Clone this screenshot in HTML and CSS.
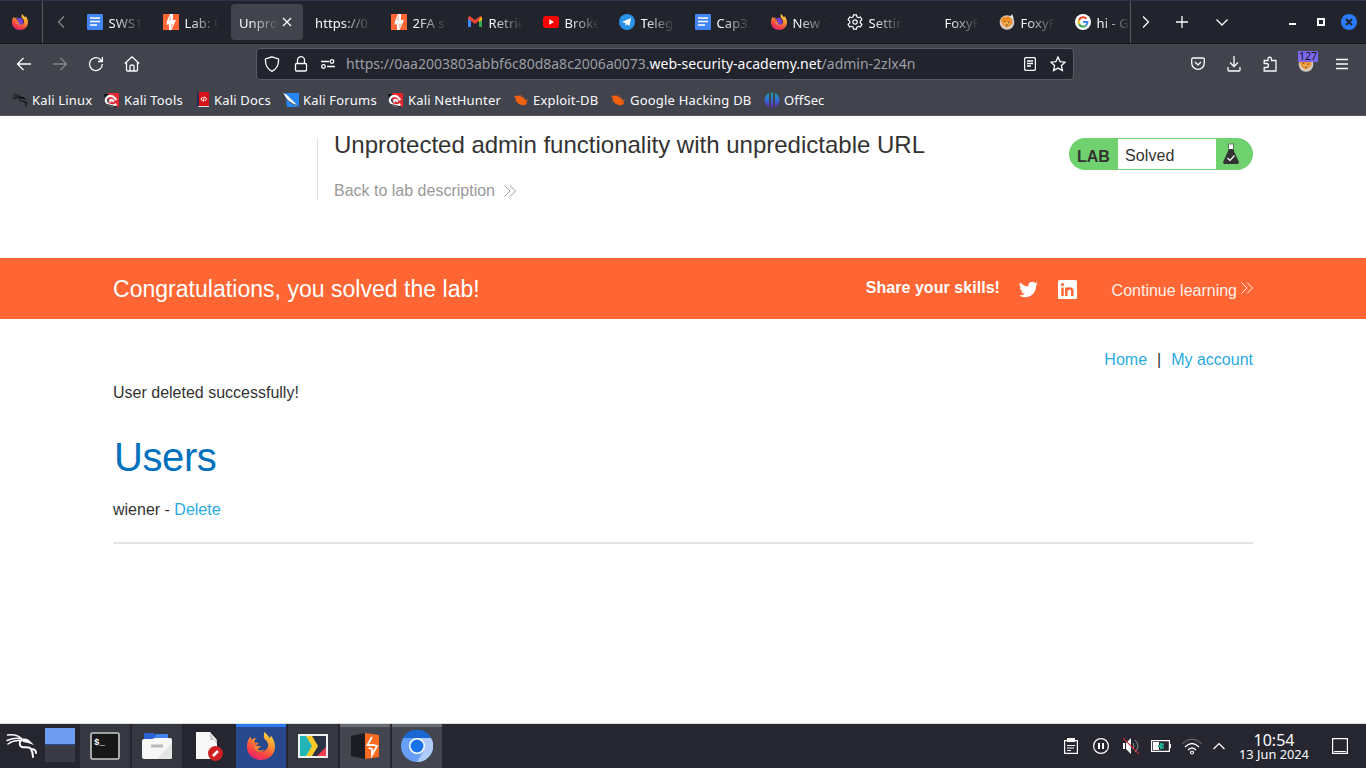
FILE: index.html
```html
<!DOCTYPE html>
<html lang="en">
<head>
<meta charset="utf-8">
<title>Unprotected admin functionality with unpredictable URL</title>
<link rel="stylesheet" href="styles.css">
</head>
<body>
<svg class="defs" width="0" height="0">
  <defs>
    <linearGradient id="fxBody" x1=".8" y1="0" x2=".3" y2="1"><stop offset="0" stop-color="#ffe13a"/><stop offset=".4" stop-color="#ff9130"/><stop offset=".75" stop-color="#fb4043"/><stop offset="1" stop-color="#e52475"/></linearGradient>
    <linearGradient id="offsec" x1="0" y1="0" x2="0" y2="1"><stop offset="0" stop-color="#16a3a6"/><stop offset=".55" stop-color="#3468d8"/><stop offset="1" stop-color="#6a22c8"/></linearGradient>
    <symbol id="firefox" viewBox="0 0 32 32">
      <path d="M20 0c2 2 4 4 6 7 1-1 1-2 1-3 3 3 5 8 5 13 0 8-7 15-16 15S0 25 0 17c0-5 1-9 4-12l1 4c2-2 4-2 6-2-2 1-3 3-2 5l4 0c1 2-2 3-4 4 1 6 8 8 13 4 4-4 2-9-2-12-1-3-1-6 0-8z" fill="url(#fxBody)"/>
      <path d="M9 12c2-4 5-5 9-4 4 2 6 7 4 11-3 5-10 5-13 0-1-1-1-2 0-3 2-1 5-2 4-4z" class="globe"/>
      <path d="M8 16c3-1 5 1 8 0-1 3-3 2-4 4 2 2 6 1 8-1-2 5-10 6-12-3z" fill="#ff8a2c"/>
    </symbol>
    <symbol id="doc" viewBox="0 0 16 16"><rect width="16" height="16" rx="1" fill="#4285f4"/><path d="M3 4h10M3 7.500h10M3 11h7" stroke="#fff" stroke-width="1.600"/></symbol>
    <symbol id="burp" viewBox="0 0 16 16"><rect width="16" height="16" fill="#ff6633"/><path d="M7 0h3v6h3L8.500 16H6v-5.500H3.500L4 7z" fill="#fff"/><path d="M8 0v1L5.500 6.500H8zM8 10v5l2.500-5z" fill="#ff6633" opacity=".4"/></symbol>
    <symbol id="fox" viewBox="0 0 16 16"><circle cx="8" cy="8.500" r="7.300" fill="#d7cdbf"/><path d="M1.500 6l3-3 5-.5 3 2 1 4-2 3-4 2-4-3z" fill="#f38b23"/><path d="M3 6l5 2 4-2-1 4-3 2-3-2z" fill="#f6ad4c"/><path d="M4.500 7l2 1M9 9l2-1.500M7 11h2" stroke="#6a4b30"/><path d="M11 3l2-3 2 5z" fill="#eee"/></symbol>
    <symbol id="dragon" viewBox="0 0 32 26"><path d="M2.500 3C9 2 14 3 18 8M2 8.500c5-2 10-3 15-1.500M3 12c4-3 8-4 12-3.500" fill="none" stroke="currentColor" stroke-width="1.500" stroke-linecap="round"/><path d="M17 8c-3 1-3 6 0 7 3 1 7-1 9 2 1 2 2 4 2 8M26 17c3 0 5 1 5 4" fill="none" stroke="currentColor" stroke-width="1.900" stroke-linecap="round"/><path d="M17 7c4-1 6 0 8 2l4 4-6-2-5-1z" fill="currentColor"/></symbol>
    <symbol id="tools" viewBox="0 0 16 16"><path d="M4 1h11v14L5 13z" fill="#e8262d"/><path d="M0 2h5L1 7z" fill="#111"/><path d="M12.500 8L9 4.500C5 2.500 1 5.500 2 9.500c2 4 7 5 10.500 2.500M10 9.500L8 8c-2-.5-2.500 1-1 2" fill="none" stroke="#f4f4f4" stroke-width="2.200"/><path d="M3 12.500l10 2.500" stroke="#222"/></symbol>
    <symbol id="bug" viewBox="0 0 16 16"><path d="M2 5c2-3 5-1 7 0l4 3c1 2 1 4-1 5-3 1-6-1-8-3z" fill="#f26311"/><path d="M1 4l3 2M2 9h4M5 12l2-2M8 3v3M11 5l-1 3M15 8l-4 1M14 12l-4-2" stroke="#ed5b0d" stroke-width=".8"/></symbol>
    <symbol id="chev2" viewBox="0 0 12 12"><path d="M.5.500L6 6 .500 11.500M6 .500L11.500 6 6 11.500" fill="none" stroke="currentColor"/></symbol>
  </defs>
</svg>

<div class="tabbar">
  <div class="pinned"><svg width="16" height="16"><use href="#firefox"/></svg></div>
  <div class="scroll-left"><svg width="8" height="12" viewBox="0 0 8 12"><path d="M7 .5L1.500 6 7 11.500" class="dimline"/></svg></div>
  <div class="tabs">
    <div class="tab"><svg width="16" height="16"><use href="#doc"/></svg><span class="fade">SWS1</span></div>
    <div class="tab"><svg width="16" height="16"><use href="#burp"/></svg><span class="fade">Lab: Un</span></div>
    <div class="tab active"><span class="fade">Unprot</span><svg class="close" width="10" height="10" viewBox="0 0 10 10"><path d="M1 1l8 8M9 1L1 9" class="line"/></svg></div>
    <div class="tab"><span class="fade">https://0aa</span></div>
    <div class="tab"><svg width="16" height="16"><use href="#burp"/></svg><span class="fade">2FA si</span></div>
    <div class="tab"><svg width="16" height="16" viewBox="0 0 16 16"><path d="M2.500 13V4" stroke="#4285f4" stroke-width="3"/><path d="M13.500 13V4" stroke="#34a853" stroke-width="3"/><path d="M1.500 3L8 8l6.500-5" stroke="#ea4335" stroke-width="3" fill="none"/><path d="M12 5l3-2.500V6l-3 2z" fill="#fbbc04"/></svg><span class="fade">Retrie</span></div>
    <div class="tab"><svg width="16" height="16" viewBox="0 0 16 16"><rect y="2" width="16" height="12" rx="3" fill="#f00"/><path d="M6.300 5.300L11 8l-4.700 2.700z" fill="#fff"/></svg><span class="fade">Broke</span></div>
    <div class="tab"><svg width="16" height="16" viewBox="0 0 16 16"><circle cx="8" cy="8" r="8" fill="#2a93e8"/><path d="M3 8l9-4-1.500 8-2.500-1.800L6.500 12V9z" fill="#fff"/></svg><span class="fade">Telegr</span></div>
    <div class="tab"><svg width="16" height="16"><use href="#doc"/></svg><span class="fade">Cap3.</span></div>
    <div class="tab"><svg width="16" height="16"><use href="#firefox"/></svg><span class="fade">New T</span></div>
    <div class="tab"><svg width="16" height="16" viewBox="0 0 16 16" fill="none" stroke="#fbfbfe" stroke-width="1.200"><circle cx="8" cy="8" r="2.200"/><path d="M6.500.8h3l.4 2 1.500.9 2-.7 1.500 2.600-1.600 1.500v1.800l1.600 1.500-1.500 2.600-2-.7-1.500.9-.4 2h-3l-.4-2-1.500-.9-2 .7-1.500-2.600 1.600-1.500V7.100L1.100 5.600 2.600 3l2 .7 1.500-.9z"/></svg><span class="fade">Setting</span></div>
    <div class="tab"><i class="noicon"></i><span class="fade">FoxyP</span></div>
    <div class="tab"><svg width="16" height="16"><use href="#fox"/></svg><span class="fade">FoxyP</span></div>
    <div class="tab last"><svg width="16" height="16" viewBox="0 0 16 16"><circle cx="8" cy="8" r="8" fill="#fff"/><g fill="none" stroke-width="2"><path d="M11.500 4.700A4.500 4.500 0 0 0 4 6" stroke="#ea4335"/><path d="M4 6a4.500 4.500 0 0 0 0 4" stroke="#fbbc05"/><path d="M4 10a4.500 4.500 0 0 0 7 1.500" stroke="#34a853"/><path d="M8 8h4.500c0 1.500-.5 2.700-1.500 3.500" stroke="#4285f4"/></g></svg><span class="fade">hi - Go</span></div>
  </div>
  <div class="tab-tools">
    <svg width="8" height="12" viewBox="0 0 8 12"><path d="M1 .5L6.500 6 1 11.500" class="line"/></svg>
    <svg width="12" height="12" viewBox="0 0 12 12"><path d="M6 0v12M0 6h12" class="line"/></svg>
    <svg width="12" height="7" viewBox="0 0 12 7"><path d="M.5.500L6 6 11.500.500" class="line"/></svg>
  </div>
  <div class="window-tools">
    <i class="min"></i><i class="max"></i>
    <svg width="16" height="16" viewBox="0 0 16 16"><circle cx="8" cy="8" r="8" fill="#2a7bff"/><path d="M5 5l6 6M11 5l-6 6" stroke="#22242c" stroke-width="2"/></svg>
  </div>
</div>

<div class="navbar">
  <div class="nav-left">
    <svg width="16" height="16" viewBox="0 0 16 16"><path d="M15 8H1.500M7.500 2L1.500 8l6 6" class="line"/></svg>
    <svg width="16" height="16" viewBox="0 0 16 16"><path d="M1 8h13.500M8.500 2l6 6-6 6" class="dimline"/></svg>
    <svg width="16" height="16" viewBox="0 0 16 16"><path d="M14.300 8A6.400 6.400 0 1 1 12 3.200L14 5M14.400 1v4.500H10" class="line"/></svg>
    <svg width="16" height="16" viewBox="0 0 16 16"><path d="M.8 7.500L8 .8l7.200 6.700M2.500 6.500v7.500q0 1 1 1h9q1 0 1-1V6.500M6 15v-5q0-1 2-1t2 1v5" class="line"/></svg>
  </div>
  <div class="urlbar">
    <div class="url-icons">
      <svg width="16" height="16" viewBox="0 0 16 16"><path d="M8 .8L14.500 3C15 9 12.500 13 8 15.300 3.500 13 1 9 1.500 3z" class="line"/></svg>
      <svg width="14" height="16" viewBox="0 0 14 16"><path d="M3.500 7.500V4.200a3.500 3.500 0 0 1 7 0v3.300M2.500 7.500h9q1 0 1 1V14q0 1-1 1h-9q-1 0-1-1V8.500q0-1 1-1z" class="line"/></svg>
      <svg width="14" height="12" viewBox="0 0 14 12"><path d="M0 3.500h8M6 8.500h8" class="line"/><circle cx="11" cy="3.500" r="1.800" class="line"/><circle cx="2.500" cy="8.500" r="1.800" class="line"/></svg>
    </div>
    <div class="url">https://0aa2003803abbf6c80d8a8c2006a0073.<b>web-security-academy.net</b>/admin-2zlx4n</div>
    <div class="url-end">
      <svg width="12" height="14" viewBox="0 0 12 14"><rect x=".6" y=".6" width="10.800" height="12.800" rx="1.500" class="line"/><path d="M3 4h6M3 6.500h6M3 9h4" class="line"/></svg>
      <svg width="16" height="16" viewBox="0 0 16 16"><path d="M8 1l2.100 4.600 5 .6-3.700 3.400 1 5L8 12.100 3.600 14.600l1-5L.9 6.200l5-.6z" class="line"/></svg>
    </div>
  </div>
  <div class="nav-right">
    <svg width="14" height="14" viewBox="0 0 14 14"><path d="M2 1h10q1.300 0 1.300 1.500V6A6.300 6.300 0 0 1 .7 6V2.500Q.7 1 2 1zM4 5l3 3 3-3" class="line"/></svg>
    <svg width="14" height="16" viewBox="0 0 14 16"><path d="M7 0v10M3 6.500l4 4 4-4M1 11v3q0 1 1 1h10q1 0 1-1v-3" class="line"/></svg>
    <svg width="14" height="16" viewBox="0 0 14 16"><path d="M1.200 7.500V4.500H5V3a1.700 1.700 0 0 1 3.500 0v1.500H13V15H1.200v-3.500H3.500a1.800 1.800 0 0 0 0-4z" class="line"/></svg>
    <div class="proxy"><svg width="16" height="16"><use href="#fox"/></svg><span class="badge">127</span></div>
    <svg width="12" height="12" viewBox="0 0 12 12"><path d="M0 1.500h12M0 6h12M0 10.500h12" class="line"/></svg>
  </div>
</div>

<div class="bookmarks">
  <div class="bm bm-a"><svg class="black" width="16" height="16"><use href="#dragon"/></svg>Kali Linux</div>
  <div class="bm bm-b"><svg width="16" height="16"><use href="#tools"/></svg>Kali Tools</div>
  <div class="bm bm-c"><svg width="16" height="16" viewBox="0 0 16 16"><path d="M3 0h12v15H3z" fill="#d41419"/><path d="M3 0h2v15H3z" fill="#282a53"/><path d="M4 14h11v1H4z" fill="#ddd"/><path d="M8.500 5L7 7l1.500 2M11 5l1.500 2L11 9M10.200 4.500L9.300 9.500" stroke="#fff" fill="none"/></svg>Kali Docs</div>
  <div class="bm bm-d"><svg width="16" height="16" viewBox="0 0 16 16"><path d="M2 1h14v14H4z" fill="#2585f5"/><path d="M0 1l4 2 4 4 7 7-4-1-6-4-3-4z" fill="#fff"/><path d="M0 2l4 6 6 4 5 2" stroke="#1b1d26" fill="none" stroke-width=".8"/></svg>Kali Forums</div>
  <div class="bm bm-e"><svg width="16" height="16"><use href="#tools"/></svg>Kali NetHunter</div>
  <div class="bm bm-f"><svg width="16" height="16"><use href="#bug"/></svg>Exploit-DB</div>
  <div class="bm bm-g"><svg width="16" height="16"><use href="#bug"/></svg>Google Hacking DB</div>
  <div class="bm bm-h"><svg width="16" height="16" viewBox="0 0 16 16"><path d="M5 1v14C-1 12-1 4 5 1zM11 1v14c6-3 6-11 0-14zM7 .5h2v15H7z" fill="url(#offsec)"/></svg>OffSec</div>
</div>

<main class="page">
  <header class="lab-header">
    <div class="lab-title">
      <h2>Unprotected admin functionality with unpredictable URL</h2>
      <a class="back"><span>Back to lab description</span><svg width="12" height="12"><use href="#chev2"/></svg></a>
    </div>
    <div class="lab-status">
      <b>LAB</b><p>Solved</p>
      <svg width="18" height="22" viewBox="0 0 18 22"><path d="M6.500 1v6L1.500 18Q.5 21 2.500 21h13q2 0 1-3L11.500 7V1z" fill="#333332"/><path d="M7 1h4v5H7z" fill="#fff"/><path d="M5.500 1h7" stroke="#777"/><path d="M5.500 15l2.500 2.500 4.500-5" fill="none" stroke="#fff" stroke-width="1.200"/></svg>
    </div>
  </header>
  <section class="solved">
    <h4>Congratulations, you solved the lab!</h4>
    <div class="share"><b>Share your skills!</b>
      <svg width="19" height="19" viewBox="0 0 24 24"><path fill="#fff" d="M23.950 4.570a10 10 0 0 1-2.820.770 4.960 4.960 0 0 0 2.160-2.720c-.95.550-2 .950-3.130 1.180a4.920 4.920 0 0 0-8.380 4.480C7.690 8.090 4.070 6.130 1.640 3.160a4.920 4.920 0 0 0 1.520 6.570 4.900 4.900 0 0 1-2.230-.610v.060c0 2.390 1.700 4.380 3.950 4.830a5 5 0 0 1-2.210.080 4.940 4.940 0 0 0 4.600 3.420A9.870 9.870 0 0 1 0 19.540a13.990 13.990 0 0 0 7.550 2.210c9.050 0 14-7.500 14-13.980 0-.210 0-.420-.020-.630a9.940 9.940 0 0 0 2.420-2.570z"/></svg>
      <svg width="19" height="19" viewBox="0 0 19 19"><rect width="19" height="19" rx="1.500" fill="#fff"/><path d="M4.500 7.500V16M8.300 7.500V16M8.300 11c.5-3.500 6-3.500 6 0v5" fill="none" stroke="#f63" stroke-width="2.500"/><circle cx="4.500" cy="4.500" r="1.600" fill="#f63"/></svg>
    </div>
    <a class="continue"><span>Continue learning</span><svg width="12" height="12"><use href="#chev2"/></svg></a>
  </section>
  <section class="content">
    <nav class="links"><a class="home">Home</a><i>|</i><a class="account">My account</a></nav>
    <p class="message">User deleted successfully!</p>
    <h1>Users</h1>
    <p class="user">wiener - <a>Delete</a></p>
    <hr>
  </section>
</main>

<footer class="taskbar">
  <div class="kali"><svg width="32" height="26"><use href="#dragon"/></svg></div>
  <div class="pager"><i class="desk on"></i><i class="desk"></i></div>
  <div class="task"><svg width="30" height="28" viewBox="0 0 30 28"><rect x="1" y="1" width="28" height="26" rx="1.500" fill="#171717" stroke="#c9c9c7" stroke-width="1.600"/><text x="4" y="13" class="prompt">$_</text></svg></div>
  <div class="task"><svg width="30" height="28" viewBox="0 0 30 28"><path d="M2 2q0-1 1-1h9l2 2h11q1 0 1 1v9H2z" fill="#2c62cf"/><path d="M14 2h12v6H12z" fill="#4183ed"/><path d="M0 9q0-2 2-2h8l3-1h15q2 0 2 2v17q0 2-2 2H2q-2 0-2-2z" fill="#f7f7f7"/><path d="M30 11v14q0 2-2 2H15z" fill="#e5e5e5"/><path d="M9 14h12" stroke="#bbb" stroke-width="3"/></svg></div>
  <div class="task plain"><svg width="28" height="30" viewBox="0 0 28 30"><path d="M1 1h14l7 8v19H1z" fill="#f8f8f8"/><path d="M15 1v8h7v5z" fill="#ccc"/><circle cx="20.500" cy="22.500" r="7.500" fill="#cf2023"/><path d="M18 25l5-5" stroke="#fff" stroke-width="2.500"/></svg></div>
  <div class="task current"><svg width="28" height="28"><use href="#firefox"/></svg></div>
  <div class="task"><svg width="30" height="24" viewBox="0 0 30 24"><rect x="1" y="1" width="28" height="22" fill="#2b3245" stroke="#f0f0f0" stroke-width="2"/><path d="M2 2h8l5 10-5 10H2z" fill="#23b5b5"/><path d="M8 2h6l6 10-6 10H8l6-10z" fill="#ffc928"/><path d="M28 13v9H19z" fill="#f53f4c"/></svg></div>
  <div class="task open"><svg width="28" height="28" viewBox="0 0 28 28"><path d="M0 4L14 1v26L0 24z" fill="#1b1c22"/><path d="M14 1l14 2v22l-14 2z" fill="#f96b22"/><path d="M21 5l-4.500 8H22L26 14l-5 9v-6l-3.500-1" fill="none" stroke="#fff" stroke-width="1.800"/></svg></div>
  <div class="task open"><svg width="32" height="32" viewBox="0 0 32 32"><circle cx="16" cy="16" r="16" fill="#679ef8"/><path d="M2 8a16 16 0 0 1 28 0H16z" fill="#1967d2"/><path d="M16 8h14a16 16 0 0 1-14 24l7-12z" fill="#aecbfa"/><circle cx="16" cy="16" r="8" fill="#fff"/><circle cx="16" cy="16" r="6.500" fill="#1a73e8"/></svg></div>
  <div class="tray">
    <svg width="14" height="16" viewBox="0 0 14 16"><path d="M.6 2.600h12.800v12.800H.6zM3 7.500h8M3 10h7M3 12.500h4" class="trayline"/><path d="M3 0h8v4H3z" fill="#fff"/></svg>
    <svg width="16" height="16" viewBox="0 0 16 16"><circle cx="8" cy="8" r="7.400" class="trayline"/><path d="M6 5v6M10 5v6" stroke="#fff" stroke-width="2"/></svg>
    <svg width="16" height="16" viewBox="0 0 16 16"><path d="M0 5h2v6H0zM3 5l5-5v16l-5-5z" fill="#fff"/><path d="M10 5q2 3 0 6M12 2q6 6 0 12" fill="none" stroke="#8b8b90"/><path d="M0 0l16 16" stroke="#d32632" stroke-width="1.200"/></svg>
    <svg width="20" height="12" viewBox="0 0 20 12"><path d="M.6.600h17.800v10.800H.6z" class="trayline"/><path d="M2 2h6v8H2zM18 4h2v4h-2z" fill="#fff"/><path d="M7 6h3M10 3v6M10 4.500h3M10 7.500h3" stroke="#20b69a" stroke-width="2"/></svg>
    <svg width="22" height="17" viewBox="0 0 22 17"><path d="M1 6q10-10 20 0" fill="none" stroke="#737379"/><path d="M4 9q7-7 14 0M7 12q4-4 8 0" class="trayline"/><circle cx="11" cy="14.500" r="1.500" class="trayline"/></svg>
    <svg width="12" height="8" viewBox="0 0 12 8"><path d="M.5 7L6 1.500 11.500 7" class="trayline"/></svg>
  </div>
  <div class="clock"><span>10:54</span><small>13 Jun 2024</small></div>
  <svg class="showdesk" width="16" height="16" viewBox="0 0 16 16"><path d="M.6.600h14.800v14.800H.6zM2 13.500h12" class="trayline"/></svg>
</footer>
</body>
</html>
```
FILE: styles.css
```css
* { box-sizing: border-box; }
body { margin: 0; width: 1366px; height: 768px; overflow: hidden; display: flex; flex-direction: column; background: #fff; font-family: "Noto Sans", sans-serif; color: #fbfbfe; }
h1, h2, h4, p { margin: 0; font-weight: normal; }
svg { flex: none; display: block; }
i { font-style: normal; }
.defs { position: absolute; }
.globe { fill: #7a3fd0; }
.current { --globe: #27488d; }
.current .globe, .globe { fill: var(--globe, #7a3fd0); }
.line, .dimline { fill: none; stroke: #fbfbfe; stroke-width: 1.3; }
.dimline { stroke: #85868c; }

.tabbar { height: 44px; flex: none; display: flex; background: #22242d; border-top: 1px solid #31344b; border-bottom: 1px solid #15161c; font-size: 13px; }
.pinned { width: 43px; padding: 13px 0 0 12px; border-right: 1px solid #55565d; }
.scroll-left { width: 36px; padding: 15px 0 0 14px; }
.tabs { display: flex; width: 1052px; flex: none; border-right: 1px solid #55565d; overflow: hidden; }
.tab { flex: none; width: 72px; height: 36px; margin: 3px 4px 0 0; padding: 0 8px; display: flex; align-items: center; gap: 5.5px; border-radius: 4px; }
.noicon { width: 16px; flex: none; }
.fade { flex: 1; min-width: 0; overflow: hidden; white-space: nowrap; line-height: 20px; margin-top: 2px; letter-spacing: .1px; -webkit-mask-image: linear-gradient(90deg, #000 calc(100% - 30px), transparent); mask-image: linear-gradient(90deg, #000 calc(100% - 30px), transparent); }
.tab.active { background: #42444d; gap: 3px; padding-right: 11px; }
.tab.last { margin-right: 0; }
.tab-tools { display: flex; align-items: center; gap: 26px; padding-left: 11px; width: 158px; }
.tab-tools svg + svg + svg { margin-left: 2px; }
.window-tools { display: flex; align-items: center; gap: 20px; }
.min { flex: none; width: 7px; height: 2px; background: #fff; margin: 3px 1px 0 0; }
.max { flex: none; width: 8px; height: 8px; border: 2px solid #fff; margin-right: -4px; }

.navbar { height: 42px; flex: none; display: flex; align-items: center; background: #42444d; padding-bottom: 2px; }
.nav-left { width: 256px; display: flex; gap: 20px; padding-left: 16px; }
.urlbar { width: 818px; height: 32px; border: 1px solid #5a5c65; border-radius: 4px; background: #22242d; display: flex; align-items: center; }
.url-icons { width: 89px; padding-left: 7px; display: flex; align-items: center; gap: 13.5px; }
.url { width: 678px; font-size: 14px; color: #9d9ea4; white-space: nowrap; line-height: 20px; }
.url b { font-weight: 400; color: #fbfbfe; }
.url-end { display: flex; align-items: center; gap: 14px; }
.nav-right { display: flex; align-items: center; gap: 22px; padding-left: 117px; }
.proxy { position: relative; margin: 0 0 0 -1px; }
.badge { position: absolute; left: 0; top: -5px; width: 20px; height: 11px; border-radius: 1px; background: #7b68ee; color: #111; font-size: 10.5px; line-height: 11px; text-align: center; }

.bookmarks { height: 30px; flex: none; display: flex; background: #42444d; border-bottom: 1px solid #5a5b63; padding-left: 12px; font-size: 13px; letter-spacing: .18px; }
.bm { display: flex; align-items: center; gap: 4px; height: 28px; white-space: nowrap; }
.black { color: #0b0b0d; }
.bm-a { width: 92px; }
.bm-b { width: 90px; }
.bm-c { width: 89px; }
.bm-d { width: 105px; }
.bm-e { width: 125px; }
.bm-f { width: 97px; }
.bm-g { width: 154px; letter-spacing: .2px; }
.bm-h { letter-spacing: .1px; }

.page { flex: 1; min-height: 0; font-family: "Liberation Sans", Arial, sans-serif; font-size: 16px; color: #333332; background: #fff; border-bottom: 1px solid #ddd; }
.lab-header { height: 142px; padding: 22px 113px 0 317px; display: flex; justify-content: space-between; }
.lab-title { height: 62px; border-left: 1px solid #e0e0e0; padding-left: 16px; }
h2 { font-size: 24px; line-height: 28px; margin-top: -7px; white-space: nowrap; }
.back { margin-top: 22px; display: flex; align-items: center; gap: 9px; color: #999; line-height: 20px; }
.back svg { margin-top: -1px; }
.lab-status { width: 184px; height: 32px; border-radius: 16px; background: #70d26e; display: flex; align-items: center; }
.lab-status b { width: 49px; padding: 5px 0 0 8px; }
.lab-status p { width: 98px; height: 30px; background: #fff; padding-left: 7px; line-height: 34px; letter-spacing: .1px; }
.lab-status svg { margin-left: 6px; }
.solved { height: 61px; background: #f63; color: #fff; padding: 0 113px; display: flex; }
h4 { width: 753px; font-size: 23px; line-height: 63px; white-space: nowrap; letter-spacing: .03px; }
.share { width: 245px; display: flex; height: 61px; align-items: center; gap: 20px; }
.share b { width: 133px; white-space: nowrap; line-height: 20px; margin-top: -2px; letter-spacing: .05px; }
.share svg { margin-top: 1px; }
.continue { display: flex; align-items: center; gap: 4px; white-space: nowrap; padding: 4px 0 0 1px; color: #ffefe9; }
.continue svg { margin-top: -5px; }
.content { padding: 31px 113px 0; }
.links { display: flex; justify-content: flex-end; gap: 10px; line-height: 20px; }
.links a, .user a { color: #29abe2; }
.message { margin-top: 13px; line-height: 20px; }
h1 { color: #0071bc; font-size: 40px; line-height: 48px; margin-top: 30px; letter-spacing: -.4px; padding-left: 1px; }
.user { margin-top: 18px; line-height: 22px; }
hr { margin: 21px 0 0; border: 0; height: 2px; background: #e4e4e4; }

.taskbar { height: 44px; flex: none; display: flex; background: #25262f; }
.kali { width: 45px; padding: 8px 0 0 5px; }
.pager { width: 35px; padding-top: 4px; }
.desk { display: block; width: 30px; height: 17px; background: #383a44; }
.desk.on { background: #709df0; border-bottom: 1px solid #2a4a90; }
.task { width: 50px; margin-right: 2px; background: #353741; display: flex; align-items: center; justify-content: center; }
.task.plain { background: #25262f; }
.task.current { background: #27488d; box-shadow: inset 0 3px #2a7af4; }
.task.open { background: #44464f; box-shadow: inset 0 3px #696b72; }
.prompt { font: bold 9px "Liberation Mono", monospace; fill: #fff; }
.trayline { fill: none; stroke: #fff; stroke-width: 1.2; }
.tray { margin-left: auto; width: 170px; display: flex; align-items: center; gap: 11px; }
.tray svg:nth-child(-n+2) { margin-right: 3px; }
.tray svg:first-child { margin-right: 4px; }
.tray svg:nth-child(3) { margin-right: 1px; }
.tray svg:nth-child(4) { margin-right: -1px; }
.tray svg:nth-child(6) { margin-left: -1px; }
.clock { width: 80px; display: flex; flex-direction: column; align-items: center; padding-top: 8px; }
.clock span { font-size: 16px; line-height: 17px; }
.clock small { font-size: 12.8px; line-height: 11px; white-space: nowrap; }
.showdesk { margin: 14px 18px 0 18px; }
```
